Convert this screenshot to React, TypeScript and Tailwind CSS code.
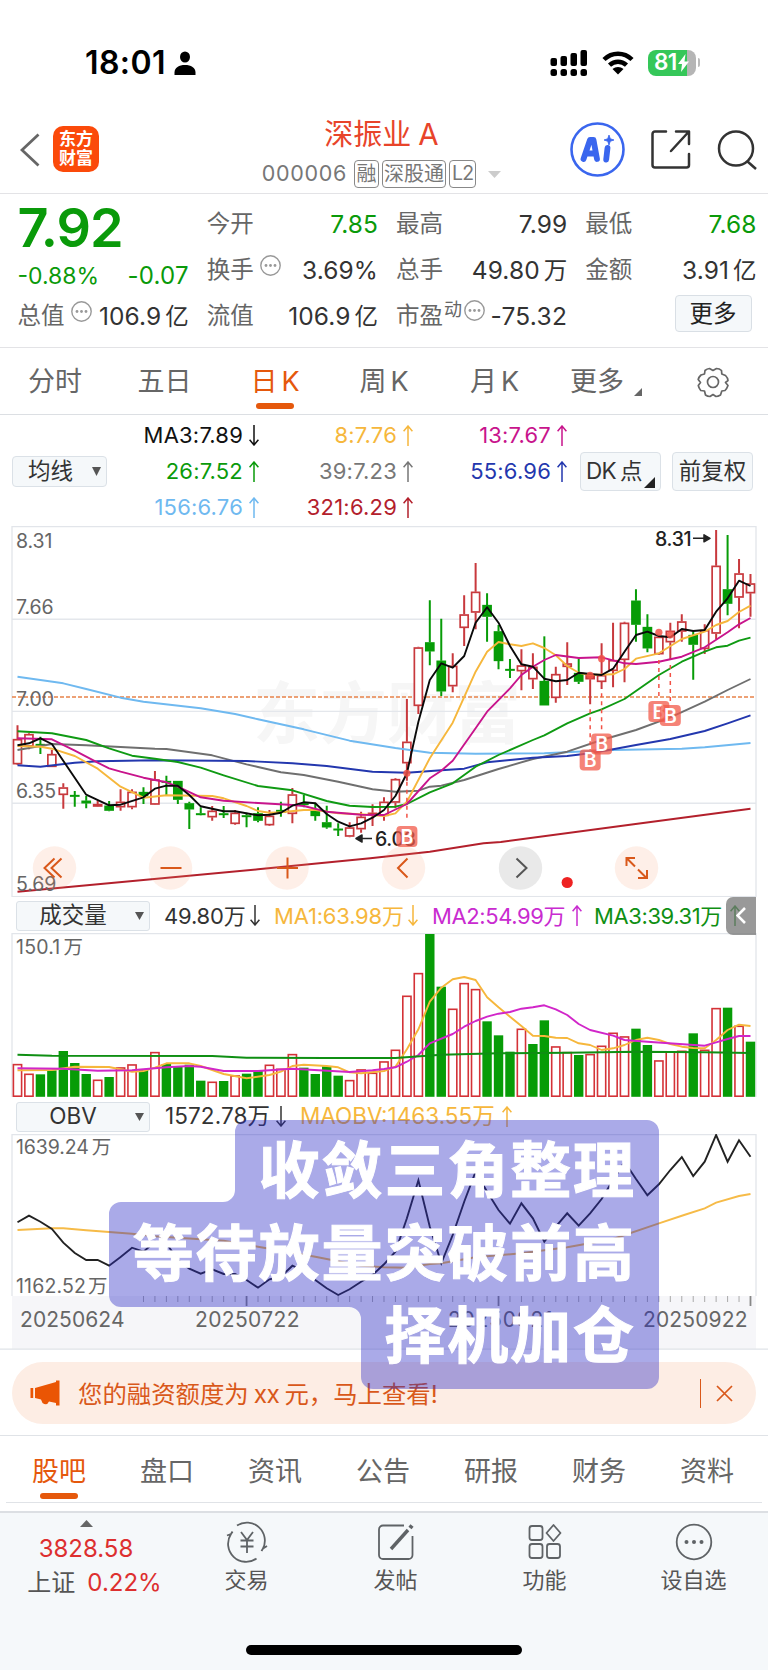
import type { ReactNode } from "react";

type Pt = [number, number];
type Candle = [string, number, number, number, number];

const cx = (i: number) => 17.5 + 11.453 * i;
const toPath = (pts: Pt[], top: number) =>
  pts.map(([i, y], k) => `${k ? "L" : "M"}${cx(i).toFixed(1)} ${(top + y / 3).toFixed(1)}`).join("");

/* index order; [colour, high, body top, body bottom, low] in thirds of a pixel */
const candles: Candle[] = [
  ["r", 616, 657, 733, 735], ["r", 640, 642, 680, 688], ["g", 650, 672, 676, 702], ["r", 690, 702, 741, 741],
  ["r", 790, 802, 825, 866], ["g", 813, 825, 829, 860], ["g", 828, 842, 850, 865], ["s", 842, 852, 860, 861],
  ["g", 843, 857, 872, 874], ["r", 808, 845, 862, 872], ["r", 808, 815, 862, 868], ["g", 802, 816, 828, 852],
  ["r", 753, 778, 854, 855], ["g", 767, 783, 787, 825], ["g", 783, 783, 839, 852], ["g", 845, 850, 868, 927],
  ["g", 862, 880, 884, 886], ["r", 858, 872, 892, 902], ["g", 858, 880, 884, 894], ["r", 870, 878, 912, 914],
  ["g", 878, 886, 890, 922], ["g", 862, 880, 902, 907], ["r", 870, 887, 916, 918], ["g", 845, 870, 878, 890],
  ["r", 804, 823, 882, 910], ["g", 825, 850, 854, 862], ["g", 848, 872, 888, 902], ["g", 857, 907, 922, 926],
  ["g", 910, 926, 930, 948], ["r", 907, 922, 950, 952], ["r", 875, 890, 928, 938], ["r", 853, 878, 884, 918],
  ["r", 832, 845, 888, 902], ["r", 775, 777, 848, 865], ["r", 537, 665, 730, 782], ["r", 380, 382, 558, 582],
  ["g", 241, 367, 394, 436], ["g", 296, 422, 514, 528], ["r", 400, 437, 499, 517], ["r", 226, 283, 324, 378],
  ["r", 129, 215, 278, 328], ["g", 220, 255, 290, 365], ["g", 315, 334, 423, 448], ["g", 417, 447, 451, 474],
  ["r", 388, 436, 454, 511], ["r", 400, 440, 478, 507], ["g", 349, 483, 556, 556], ["r", 440, 462, 534, 548],
  ["r", 367, 430, 441, 495], ["g", 416, 459, 485, 492], ["s", 458, 465, 478, 553], ["r", 370, 465, 486, 507],
  ["r", 308, 420, 453, 502], ["r", 305, 308, 420, 487], ["g", 208, 242, 314, 365], ["g", 283, 321, 385, 397],
  ["r", 345, 350, 403, 405], ["r", 308, 332, 367, 420], ["r", 283, 304, 335, 365], ["g", 335, 345, 374, 479],
  ["r", 313, 330, 387, 402], ["r", 30, 137, 341, 357], ["g", 45, 208, 251, 286], ["r", 117, 160, 233, 325],
  ["r", 162, 190, 220, 290],
];

const ma: { color: string; pts: Pt[] }[] = [
  { color: "#b3202c", pts: [[0, 1115], [21, 1048], [30.8, 1015], [36, 995], [40.7, 970], [42.2, 966], [53.8, 913], [64, 866]] },
  { color: "#6fb9f0", pts: [[0, 470], [4, 490], [6, 507], [9, 533], [11, 545], [16, 565], [19, 582], [21, 598], [25, 628], [29, 662], [33, 684], [36, 698], [40, 701], [46, 700], [52, 690], [58, 686], [60, 682], [64, 669]] },
  { color: "#6f6f6f", pts: [[0, 690], [2, 678], [3, 672], [6, 676], [12, 686], [13, 687], [17, 706], [20, 733], [21, 741], [23, 757], [25, 765], [28, 785], [31, 808], [33, 815], [35, 812], [36, 800], [37, 797], [39, 780], [42, 747], [45, 717], [48, 695], [51, 660], [54, 630], [57, 592], [60, 545], [62, 510], [64, 477]] },
  { color: "#2337ae", pts: [[0, 736], [2, 740], [5, 728], [7, 724], [12, 721], [20, 723], [24, 730], [27, 738], [31, 755], [34, 758], [37, 751], [39, 746], [41, 727], [43, 720], [45, 713], [48, 708], [50, 700], [52, 688], [54, 675], [57, 657], [60, 633], [62, 610], [64, 586]] },
  { color: "#0f9a13", pts: [[0, 634], [3, 640], [6, 660], [8, 685], [10, 707], [12, 716], [14, 726], [16, 743], [18, 766], [21, 798], [24, 811], [27, 843], [29, 857], [31, 861], [33, 860], [34, 852], [36, 817], [38, 790], [40, 740], [42, 705], [45, 660], [46, 646], [48, 610], [50, 580], [51, 568], [53, 537], [56, 465], [58, 425], [60, 395], [61, 382], [62, 377], [63, 362], [64, 353]] },
  { color: "#f6b73c", pts: [[0, 678], [2, 680], [3, 686], [5, 708], [7, 746], [9, 800], [11, 833], [13, 826], [17, 828], [18, 835], [20, 858], [21, 873], [22, 878], [23, 877], [25, 870], [26, 870], [28, 880], [30, 883], [32, 888], [33, 880], [34, 845], [36, 715], [38, 608], [40, 455], [41, 395], [42, 366], [43, 373], [44, 378], [45, 370], [46, 384], [47, 406], [48, 438], [49, 458], [50, 465], [52, 463], [53, 447], [54, 416], [56, 400], [58, 357], [60, 335], [61, 315], [62, 303], [63, 276], [64, 257]] },
  { color: "#c8148c", pts: [[0, 655], [3, 658], [5, 692], [7, 728], [8, 745], [9, 755], [11, 773], [13, 787], [14, 800], [16, 832], [18, 842], [21, 849], [24, 855], [25, 858], [27, 875], [30, 884], [32, 885], [34, 852], [36, 775], [37, 752], [38, 722], [40, 625], [41, 575], [43, 505], [44, 465], [45, 440], [46, 420], [47, 405], [49, 414], [51, 412], [53, 430], [54, 432], [56, 425], [58, 410], [60, 382], [62, 337], [63, 313], [64, 294]] },
  { color: "#0a0a0a", pts: [[0, 676], [1, 670], [2, 655], [3, 672], [6, 824], [8, 856], [9, 854], [11, 832], [12, 806], [13, 797], [14, 797], [15, 825], [16, 859], [18, 874], [19, 874], [21, 886], [22, 884], [23, 878], [24, 857], [25, 847], [26, 850], [27, 882], [28, 905], [29, 919], [30, 910], [31, 893], [32, 870], [33, 828], [34, 760], [35, 605], [36, 480], [37, 430], [38, 443], [39, 408], [40, 308], [41, 262], [42, 308], [43, 378], [44, 433], [45, 440], [46, 476], [47, 484], [48, 480], [49, 458], [50, 462], [51, 465], [52, 446], [53, 395], [54, 345], [55, 335], [56, 348], [57, 352], [58, 327], [59, 333], [60, 330], [61, 275], [62, 235], [63, 182], [64, 198]] },
];

const volumes = "r523 r552 g553 g541 g483 g519 g552 r570 g561 r533 r524 g540 r487 g522 g528 g524 g572 r576 g573 r557 g551 g540 r525 r537 r493 g533 g552 g529 g557 r571 r539 r549 r515 r480 r318 r250 g132 g290 r357 r280 r298 g394 g436 g485 r417 g462 g391 r470 r487 g495 r493 r468 r429 r440 g416 g465 r512 r485 r483 g430 r480 r355 g353 r408 g455".split(" ");

const volMa: { color: string; pts: Pt[] }[] = [
  { color: "#f6b73c", pts: [[0, 541], [3, 540], [5, 530], [8, 531], [10, 545], [11, 543], [12, 533], [13, 520], [15, 520], [16, 528], [18, 552], [20, 565], [22, 555], [23, 545], [24, 528], [25, 524], [27, 528], [28, 532], [29, 547], [30, 550], [32, 543], [33, 530], [34, 478], [35, 418], [36, 335], [37, 293], [38, 268], [39, 261], [40, 270], [41, 322], [42, 352], [43, 380], [44, 408], [45, 437], [46, 438], [47, 443], [48, 444], [49, 460], [50, 465], [51, 480], [52, 475], [53, 465], [54, 450], [55, 443], [56, 450], [57, 462], [58, 470], [59, 474], [60, 475], [61, 450], [62, 420], [63, 404], [64, 408]] },
  { color: "#d126c9", pts: [[0, 535], [4, 536], [7, 542], [10, 541], [13, 532], [15, 528], [16, 530], [18, 543], [21, 543], [24, 536], [29, 546], [31, 541], [32, 537], [33, 532], [34, 515], [35, 495], [36, 460], [38, 432], [39, 410], [40, 393], [41, 380], [42, 371], [43, 366], [44, 356], [45, 352], [46, 346], [47, 358], [48, 375], [49, 402], [50, 420], [52, 437], [53, 450], [55, 455], [60, 467], [61, 457], [62, 447], [63, 438], [64, 438]] },
  { color: "#0f8f13", pts: [[0, 494], [3, 497], [17, 498], [20, 503], [27, 504], [33, 504], [37, 494], [42, 490], [48, 488], [54, 485], [60, 487], [64, 489]] },
];

const obv: Pt[] = [382, 362, 380, 402, 443, 474, 495, 495, 512, 486, 458, 470, 440, 445, 495, 521, 536, 523, 537, 537, 555, 578, 553, 545, 512, 528, 555, 580, 600, 583, 560, 540, 508, 470, 370, 256, 395, 505, 420, 320, 230, 290, 345, 386, 325, 370, 440, 395, 355, 392, 355, 312, 255, 200, 252, 301, 268, 225, 186, 243, 200, 120, 200, 136, 185].map((y, i) => [i, y]);
const obvMa: Pt[] = [[0, 405], [3, 400], [4, 400], [6, 406], [10, 416], [12, 424], [18, 437], [21, 455], [26, 485], [30, 512], [32, 517], [34, 518], [36, 507], [37, 505], [40, 487], [44, 475], [48, 457], [52, 432], [56, 385], [58.2, 360], [60, 340], [61, 323], [63, 303], [64, 297]];

const Arrow = ({ down }: { down?: boolean }) => (
  <svg className={down ? "h-[21px] w-[10px] shrink-0 rotate-180" : "h-[21px] w-[10px] shrink-0"} viewBox="0 0 10 21" fill="none" stroke="currentColor" strokeWidth="1.5">
    <path d="M5 21V1M0.6 6.2L5 1l4.4 5.2" />
  </svg>
);

const Info = () => (
  <svg className="h-[21px] w-[21px] shrink-0" viewBox="0 0 21 21">
    <circle cx="10.5" cy="10.5" r="9.7" fill="none" stroke="#999" strokeWidth="1.4" />
    <circle cx="6" cy="10.5" r="1.4" fill="#999" />
    <circle cx="10.5" cy="10.5" r="1.4" fill="#999" />
    <circle cx="15" cy="10.5" r="1.4" fill="#999" />
  </svg>
);

const Row = ({ label, extra, children, green }: { label: string; extra?: ReactNode; children?: ReactNode; green?: boolean }) => (
  <div className="flex h-[46px] items-center">
    <span className="text-[23.5px] text-[#666]">{label}</span>
    {extra}
    <span className={green ? "ml-auto text-[24.5px] tracking-[0.1px] text-[#0a9a0a]" : "ml-auto text-[24.5px] tracking-[0.1px] text-[#333]"}>{children}</span>
  </div>
);

const Han = ({ children }: { children: string }) => <span className="ml-[4px] tracking-normal text-[23.5px]">{children}</span>;

const Ma = ({ color, text, down }: { color: string; text: string; down?: boolean }) => (
  <div className={`flex h-[36px] items-center justify-end gap-[6px] ${color}`}>
    <span className="text-[22px] tracking-[0.2px]">{text}</span>
    <Arrow down={down} />
  </div>
);

const Select = ({ children }: { children: string }) => (
  <div className="flex h-[30px] w-[134px] shrink-0 items-center rounded-[3px] border border-[#dbe1e7] bg-[#f5f8fa] text-[22.5px] text-[#333]">
    <span className="ml-auto w-[80px] text-center">{children}</span>
    <svg className="mr-[5px] ml-[22px] h-[8px] w-[9px]" viewBox="0 0 9 8"><path d="M0 0h9L4.500 8z" fill="#555" /></svg>
  </div>
);

const Badge = ({ x, y }: { x: number; y: number }) => (
  <g>
    <rect x={x - 10.5} y={y - 10.5} width="21" height="21" rx="4" fill="#f25a4a" fillOpacity="0.75" />
    <text x={x} y={y + 7} fontSize="19.500" fontWeight="600" fill="#fff" textAnchor="middle">B</text>
  </g>
);

const signals = [
  { i: 34, dot: 760, from: 785, to: 905, y: 836.5 },
  { i: 50, dot: 466, from: 568, to: 690, y: 760 },
  { i: 51, dot: 416, from: 520, to: 640, y: 744 },
  { i: 56, dot: 337, from: 420, to: 530, y: 711.5 },
  { i: 57, dot: 344, from: 435, to: 550, y: 715.5 },
];

const PriceChart = () => (
  <svg className="block h-[371px] w-[768px] font-['Inter','Noto_Sans_CJK_SC',sans-serif]" viewBox="0 526 768 371">
    <text x="387" y="738" fontSize="67" fontWeight="700" fill="#f6f6f6" textAnchor="middle">东方财富</text>
    <g stroke="#e4e7ec" strokeWidth="1.4">
      <path d="M12 619.2H756M12 711.4H756M12 803.2H756" />
    </g>
    <rect x="12" y="526.600" width="744" height="370" fill="none" stroke="#e2e5ea" strokeWidth="1.300" />
    <path d="M12 697H756" stroke="#e8824a" strokeWidth="1.700" strokeDasharray="4 2" />
    {candles.map(([k, h, t, b, l], i) => {
      const c = k === "g" ? "#079c07" : "#c8393d";
      const x = cx(i);
      const y = (v: number) => 520 + v / 3;
      return (
        <g key={i} stroke={c} strokeWidth="2">
          <path d={`M${x} ${y(h)}V${y(t)}M${x} ${y(b)}V${y(l)}`} />
          <rect x={x - 4} y={y(t) + 0.7} width="8" height={Math.max((b - t) / 3 - 1.4, 0.3)} fill={k === "r" ? "#fff" : c} strokeWidth="1.700" />
        </g>
      );
    })}
    {ma.map((m) => <path key={m.color} d={toPath(m.pts, 520)} fill="none" stroke={m.color} strokeWidth="1.900" strokeLinejoin="round" />)}
    <g fontSize="19.500" fill="#666" letterSpacing="-0.100">
      <text x="16" y="547.800">8.31</text>
      <text x="16" y="613.700">7.66</text>
      <text x="16" y="705.700">7.00</text>
      <text x="16" y="798">6.35</text>
      <text x="16" y="890.500">5.69</text>
    </g>
    <g fontSize="19.500" fill="#222" letterSpacing="-0.300" fontWeight="450">
      <text x="655" y="545.500">8.31</text>
      <text x="375" y="846">6.03</text>
    </g>
    <g stroke="#222" strokeWidth="1.500" fill="#222">
      <path d="M693 538.300H706M704 534.800L710 538.300L704 541.800z" strokeLinejoin="round" />
      <path d="M372 838.500H360M362 835L356 838.500L362 842z" strokeLinejoin="round" />
    </g>
    {signals.map((s) => (
      <g key={s.i}>
        <circle cx={cx(s.i)} cy={520 + s.dot / 3} r="3.600" fill="#f25246" fillOpacity="0.85" />
        <path d={`M${cx(s.i)} ${520 + s.from / 3}V${520 + s.to / 3}`} stroke="#f25246" strokeWidth="1.500" strokeDasharray="4 4" />
        <Badge x={cx(s.i)} y={s.y} />
      </g>
    ))}
    <g fill="#fb9263" fillOpacity="0.15">
      {[54.5, 170.5, 287, 403.5, 636.5].map((x) => <circle key={x} cx={x} cy="868" r="21.700" />)}
    </g>
    <circle cx="520.500" cy="868" r="21.700" fill="#777" fillOpacity="0.16" />
    <g fill="none" stroke="#d9581a" strokeWidth="2">
      <path d="M54.500 858.500L44.500 868L54.500 877.500M61.500 858.500L51.500 868L61.500 877.500" />
      <path d="M160.500 868H181.500M277 868H298M287.500 857.500V878.500" />
      <path d="M407.500 858.500L398 868L407.500 877.500" />
      <path d="M635 858H626.500V866M627 858.500L635 866.500M638 878H647V870M646 877.500L638 869.500" />
    </g>
    <path d="M516.500 858.500L526.500 868L516.500 877.500" fill="none" stroke="#555" strokeWidth="2" />
    <circle cx="567.200" cy="882.500" r="5.600" fill="#ee2222" />
  </svg>
);

const VolumeChart = () => (
  <svg className="block h-[165px] w-[768px] font-['Inter','Noto_Sans_CJK_SC',sans-serif]" viewBox="0 933 768 165">
    <path d="M12 1097V933.700H756V1097" fill="none" stroke="#e2e5ea" strokeWidth="1.300" />
    {volumes.map((v, i) => {
      const y = 890 + Number(v.slice(1)) / 3;
      return v[0] === "g" ? (
        <rect key={i} x={cx(i) - 4.7} y={y} width="9.400" height={1096.8 - y} fill="#079c07" />
      ) : (
        <rect key={i} x={cx(i) - 4.1} y={y + 0.3} width="8.200" height={1095.9 - y} fill="#fff" stroke="#d43237" strokeWidth="1.600" />
      );
    })}
    {volMa.map((m) => <path key={m.color} d={toPath(m.pts, 890)} fill="none" stroke={m.color} strokeWidth="1.900" strokeLinejoin="round" />)}
    <text x="16" y="953.500" fontSize="19.500" fill="#666" letterSpacing="0.200">150.1<tspan dx="3">万</tspan></text>
  </svg>
);

const dates: [number, string][] = [[20, "20250624"], [195, "20250722"], [448, "20250821"], [643, "20250922"]];

const ObvChart = () => (
  <svg className="block h-[216px] w-[768px] font-['Inter','Noto_Sans_CJK_SC',sans-serif]" viewBox="0 1134 768 216">
    <rect x="12" y="1296" width="744" height="53" fill="#f6f6f9" />
    <path d="M12 1296V1134.500H756V1296" fill="none" stroke="#e2e5ea" strokeWidth="1.300" />
    <path d={toPath(obvMa, 1095)} fill="none" stroke="#f6bb48" strokeWidth="1.900" />
    <path d={toPath(obv, 1095)} fill="none" stroke="#222" strokeWidth="1.900" />
    {Array.from({ length: 54 }, (_, k) => k + 11).map((i) => {
      const major = i === 20 || i === 42 || i === 64;
      return <path key={i} d={`M${cx(i)} 1296V${major ? 1306 : 1302}`} stroke={major ? "#888" : "#aaa"} strokeWidth={major ? 1.8 : 1} />;
    })}
    <g fontSize="19.500" fill="#666">
      <text x="16" y="1153.500" letterSpacing="-0.100">1639.24<tspan dx="3">万</tspan></text>
      <text x="16" y="1293" letterSpacing="0.150">1162.52<tspan dx="2">万</tspan></text>
    </g>
    <g fontSize="21" fill="#666">
      {dates.map(([x, d]) => <text key={d} x={x} y="1326.700" textLength={104.5} lengthAdjust="spacing">{d}</text>)}
    </g>
    <path d="M0 1349.200H768" stroke="#dfe3e8" strokeWidth="1.300" />
  </svg>
);

const periods: { text: string; latin?: string; width: string; active?: boolean }[] = [
  { text: "分时", width: "w-[110px]" },
  { text: "五日", width: "w-[109px]" },
  { text: "日", latin: "K", width: "w-[112px]", active: true },
  { text: "周", latin: "K", width: "w-[106px]" },
  { text: "月", latin: "K", width: "w-[115px]" },
];
const sections = ["股吧", "盘口", "资讯", "公告", "研报", "财务", "资料"];

const BottomItem = ({ label, children }: { label: string; children: ReactNode }) => (
  <div className="flex w-[149px] flex-col items-center pt-[8px]">
    <svg className="h-[42px] w-[44px]" viewBox="0 0 44 42" fill="none" stroke="#5f6366" strokeWidth="1.800">{children}</svg>
    <span className="mt-[6px] text-[22px] text-[#555]">{label}</span>
  </div>
);

export default function App() {
  return (
    <div className="relative h-[1670px] w-[768px] overflow-hidden bg-white font-['Inter','Noto_Sans_CJK_SC',sans-serif] leading-none font-[390] text-[#333] whitespace-nowrap">
      {/* status bar */}
      <div className="flex h-[104px] items-center pt-[21px]">
        <span className="ml-[85px] w-[81px] text-[32px] font-semibold tracking-[0.4px] text-black">18:01</span>
        <svg className="ml-[8px] h-[24px] w-[22px]" viewBox="0 0 22 24"><ellipse cx="11" cy="6" rx="5" ry="5.600" /><path d="M0.500 24v-2.500C.5 16.500 5 14 11 14s10.500 2.500 10.500 7.500V24z" /></svg>
        <svg className="ml-[354px] h-[26px] w-[38px]" viewBox="0 0 38 26">
          <rect x="0.500" y="8" width="6.500" height="8" rx="2" /><rect x="10.500" y="6" width="6.500" height="10" rx="2" /><rect x="20.500" y="3" width="6.500" height="13" rx="2" /><rect x="30.500" y="0" width="6.500" height="16" rx="2" />
          <rect x="0.500" y="19" width="6.500" height="7" rx="2.500" /><rect x="10.500" y="19" width="6.500" height="7" rx="2.500" /><rect x="20.500" y="19" width="6.500" height="7" rx="2.500" /><rect x="30.500" y="19" width="6.500" height="7" rx="2.500" />
        </svg>
        <svg className="ml-[13px] h-[24px] w-[34px]" viewBox="0 0 34 24">
          <path d="M3 8.500C11 0.800 23 0.800 31 8.500M8.500 14.200C13.500 9.600 20.500 9.600 25.500 14.200" fill="none" stroke="#000" strokeWidth="4.500" />
          <path d="M17 23.500L11.500 18C14.500 15.300 19.500 15.300 22.500 18z" />
        </svg>
        <div className="ml-[13px] flex h-[26px] w-[48px] items-center rounded-[8px] bg-linear-to-r from-[#35c759] from-82% to-[#b5b5b5] to-82% pl-[6px] text-[22.5px] font-semibold tracking-[-0.6px] text-white">
          81
          <svg className="ml-[1px] h-[18px] w-[11px]" viewBox="0 0 11 18"><path d="M7.500 0L0 10h4L3 18l8-10.500H6.500z" fill="#fff" /></svg>
        </div>
        <div className="ml-[2px] h-[9px] w-[2px] rounded-r-full bg-[#bbb]" />
      </div>

      {/* title bar */}
      <div className="flex h-[90px] items-start border-b border-[#e3e3e6]">
        <div className="flex w-[235px] items-center pt-[22px] pl-[20px]">
          <svg className="mt-[2px] h-[34px] w-[20px]" viewBox="0 0 20 34" fill="none" stroke="#666" strokeWidth="2.800"><path d="M18.500 1.500L2 17L18.500 32.500" /></svg>
          <div className="ml-[13px] flex h-[46px] w-[46px] flex-col items-center justify-center gap-[2px] rounded-[10px] bg-[#fb4a0a] text-[17px] font-bold text-white">
            <span>东方</span>
            <span>财富</span>
          </div>
        </div>
        <div className="flex w-[293px] flex-col items-center">
          <div className="mt-[16px] flex h-[29px] text-[29px] text-[#e8442a]">深振业<span className="ml-[7px] text-[29.5px]">A</span></div>
          <div className="mt-[11px] flex items-center text-[#777]">
            <span className="text-[21.5px] tracking-[0.7px]">000006</span>
            <span className="ml-[7px] flex h-[28px] items-center rounded-[4px] border-[1.5px] border-[#888] px-[1.5px] text-[20px]">融</span>
            <span className="ml-[3px] flex h-[28px] items-center rounded-[4px] border-[1.5px] border-[#888] px-[1px] text-[20px]">深股通</span>
            <span className="ml-[3px] flex h-[28px] items-center rounded-[4px] border-[1.5px] border-[#888] px-[2px] text-[19.5px] tracking-[-0.8px]">L2</span>
            <svg className="ml-[12px] h-[7px] w-[13px]" viewBox="0 0 13 7"><path d="M0 0h13L6.500 7z" fill="#ccc" /></svg>
          </div>
        </div>
        <div className="flex items-center pt-[18px] pl-[42px]">
          <svg className="h-[55px] w-[55px]" viewBox="0 0 55 55">
            <circle cx="27.500" cy="27.500" r="26" fill="none" stroke="#3a66ee" strokeWidth="2.600" />
            <g fill="none" stroke="#3a66ee" strokeWidth="5.800" strokeLinecap="round" strokeLinejoin="round">
              <path d="M13.500 37L20 18H23.500L27 37M17 31.500H25.500" />
              <path d="M37.500 26L36.200 37.500" />
            </g>
            <path d="M39 13l1.300 3.700L44 18l-3.700 1.300L39 23l-1.300-3.700L34 18l3.700-1.300z" fill="#3a66ee" stroke="#3a66ee" strokeWidth="0.800" />
          </svg>
          <svg className="ml-[26px] h-[39px] w-[40px]" viewBox="0 0 40 39" fill="none" stroke="#333" strokeWidth="2.500" strokeLinecap="round" strokeLinejoin="round">
            <path d="M15 1.500H4A2.500 2.500 0 0 0 1.500 4V35A2.500 2.500 0 0 0 4 37.500H35.500A2.500 2.500 0 0 0 38 35V24M25 1.500H38V14M37 2.500L20 21" />
          </svg>
          <svg className="ml-[26px] h-[40px] w-[41px]" viewBox="0 0 41 40" fill="none" stroke="#333" strokeWidth="2.500"><circle cx="19" cy="18.500" r="17" /><path d="M30.500 31.500L39 39" /></svg>
        </div>
      </div>

      {/* quote */}
      <div className="grid h-[154px] grid-cols-4 gap-x-[18px] border-b border-[#e3e3e6] pt-[7px] pr-[11.5px] pl-[17.5px]">
        <div className="flex flex-col">
          <div className="h-[53px] text-[54px] font-semibold tracking-[-1px] text-[#0a9a0a]">7.92</div>
          <div className="mt-[10px] flex h-[24px] items-center justify-between text-[#0a9a0a]"><span className="text-[23px]">-0.88%</span><span className="text-[24px] tracking-[0.2px]">-0.07</span></div>
          <div className="mt-[5px] flex h-[46px] items-center">
            <span className="text-[23.5px] text-[#666]">总值</span>
            <span className="mt-[-10px] ml-[6px] flex"><Info /></span>
            <span className="ml-auto text-[24.5px] tracking-[0.1px]">106.9<Han>亿</Han></span>
          </div>
        </div>
        <div>
          <Row label="今开" green>7.85</Row>
          <Row label="换手" extra={<span className="mt-[-10px] ml-[6px] flex"><Info /></span>}>3.69%</Row>
          <Row label="流值">106.9<Han>亿</Han></Row>
        </div>
        <div>
          <Row label="最高">7.99</Row>
          <Row label="总手">49.80<Han>万</Han></Row>
          <Row label="市盈" extra={<span className="mt-[-12px] ml-[1px] flex items-center gap-[2px] text-[18px] text-[#666]">动<Info /></span>}><span className="tracking-[0.3px]">-75.32</span></Row>
        </div>
        <div>
          <Row label="最低" green>7.68</Row>
          <Row label="金额">3.91<Han>亿</Han></Row>
          <div className="mt-[2px] mr-[5px] ml-auto flex h-[37px] w-[77px] items-center justify-center rounded-[4px] border border-[#d9dfe5] bg-[#f5f8fa] text-[23.5px] text-[#222]">更多</div>
        </div>
      </div>

      {/* period tabs */}
      <div className="flex h-[67px] items-center border-b-[1.5px] border-[#dcdfe3] pt-px text-[27px] text-[#666]">
        {periods.map((p) => (
          <div key={p.text} className={`relative flex h-full items-center justify-center gap-[4px] ${p.width} ${p.active ? "text-[#e5580c]" : ""}`}>
            <span>{p.text}</span>
            {p.latin && <span>{p.latin}</span>}
            {p.active && <span className="absolute bottom-[5px] h-[6px] w-[38px] rounded-full bg-[#e5580c]" />}
          </div>
        ))}
        <span className="ml-[18px]">更多</span>
        <svg className="mt-[20px] ml-[10px] h-[8px] w-[8px]" viewBox="0 0 8 8"><path d="M8 0V8H0z" fill="#666" /></svg>
        <svg className="ml-[55px] h-[32px] w-[32px]" viewBox="0 0 32 32" fill="none" stroke="#666" strokeWidth="1.700" strokeLinejoin="round">
          <circle cx="16" cy="16" r="5.500" />
          <path d="M12.500 2.500L16 4.500L19.500 2.500Q22.500 2.500 24.500 4.500L24.800 8L28.500 9.500Q31 12 31 14.500L28.500 16.500L31 19.500Q30 22.500 28 24.500L24.800 25L23.500 29Q21 30.500 19 30.500L16 28.500L13 30.500Q10.500 30.500 8.500 29L7.500 25L3.800 24.500Q1.800 22 1.300 19.500L3.500 16.500L1.200 13.500Q1.800 11 4 9L7.500 8L8 4.500Q10 2.800 12.500 2.500Z" />
        </svg>
      </div>

      {/* moving averages */}
      <div className="flex h-[111px]">
        <div className="mt-[41px] ml-[12px] flex h-[31px] w-[95px] items-center rounded-[4px] border border-[#dbe1e7] bg-[#f5f8fa] pl-[15px] text-[22.5px]">
          均线<svg className="ml-[19px] h-[9px] w-[9px]" viewBox="0 0 9 9"><path d="M0 0h9L4.500 9z" fill="#555" /></svg>
        </div>
        <div className="mt-[2px] grid w-[461px] grid-cols-[152px_154px_154px] content-start">
          <Ma color="text-[#111]" text="MA3:7.89" down />
          <Ma color="text-[#f6b73c]" text="8:7.76" />
          <Ma color="text-[#c8148c]" text="13:7.67" />
          <Ma color="text-[#0a9a0a]" text="26:7.52" />
          <Ma color="text-[#777]" text="39:7.23" />
          <Ma color="text-[#2337ae]" text="55:6.96" />
          <Ma color="text-[#6fb9f0]" text="156:6.76" />
          <Ma color="text-[#b3202c]" text="321:6.29" />
        </div>
        <div className="mt-[37px] ml-[12px] flex h-[39px] w-[81px] items-center rounded-[4px] border border-[#dbe1e7] bg-[#f5f8fa] pl-[5px] text-[22.5px]">
          <span className="tracking-[-0.7px]">DK</span><span className="ml-[4px]">点</span>
          <svg className="mt-[21px] ml-[2px] h-[11px] w-[11px] shrink-0" viewBox="0 0 11 11"><path d="M11 0V11H0z" fill="#222" /></svg>
        </div>
        <div className="mt-[37px] ml-[11px] flex h-[39px] w-[81px] items-center justify-center rounded-[4px] border border-[#dbe1e7] bg-[#f5f8fa] text-[22.5px]">前复权</div>
      </div>

      <PriceChart />

      <div className="flex h-[36px] items-center pt-px pl-[16px] text-[22px]">
        <Select>成交量</Select>
        <div className="ml-[14px] flex w-[110px] items-center justify-between pr-[14px]"><span className="tracking-[-0.2px]">49.80万</span><Arrow down /></div>
        <div className="flex w-[158px] items-center justify-between pr-[14px] text-[#f6b73c]"><span className="tracking-[-0.2px]">MA1:63.98万</span><Arrow down /></div>
        <div className="flex w-[162px] items-center justify-between pr-[12px] text-[#c92bd0]"><span className="tracking-[-0.4px]">MA2:54.99万</span><Arrow /></div>
        <div className="flex w-[146px] items-center justify-between text-[#0f8f13]"><span className="tracking-[-0.4px]">MA3:39.31万</span><Arrow /></div>
        <div className="relative ml-[-14px] flex h-[38px] w-[30px] items-center justify-center rounded-l-[7px] bg-[#777]/75">
          <svg className="h-[17px] w-[10px]" viewBox="0 0 10 17" fill="none" stroke="#fff" strokeWidth="2.600"><path d="M9 1L1.500 8.500L9 16" /></svg>
        </div>
      </div>

      <VolumeChart />

      <div className="flex h-[36px] items-center pt-px pl-[16px] text-[22px]">
        <Select>OBV</Select>
        <div className="ml-[15px] flex w-[135px] items-center justify-between pr-[14px]"><span className="text-[22.5px] tracking-[0.1px]">1572.78万</span><Arrow down /></div>
        <div className="flex w-[212px] items-center justify-between text-[#f6b73c]"><span className="text-[22.5px]">MAOBV:1463.55万</span><Arrow /></div>
      </div>

      <ObvChart />

      {/* notice */}
      <div className="mx-[12px] mt-[12px] flex h-[62px] items-center rounded-full bg-[#fdede4] text-[24.400px] text-[#d9581a]">
        <svg className="ml-[18px] h-[26px] w-[30px]" viewBox="0 0 30 26" fill="#ea5504"><path d="M0.500 8h2.700v10H.5zM5 8L26 2V0.500h3.500V25.500H26V23L19 21.500Q17 26 12.500 23L11 19.500L5 18z" /></svg>
        <span className="mt-[2px] ml-[18px]">您的融资额度为</span>
        <span className="mx-[5px] mt-[2px] tracking-[-0.500px]">xx</span>
        <span className="mt-[2px]">元，马上查看!</span>
        <span className="ml-auto h-[29px] w-[1.5px] bg-[#d9581a]" />
        <svg className="mr-[23px] ml-[15px] h-[17px] w-[17px]" viewBox="0 0 17 17" stroke="#d9581a" strokeWidth="1.700"><path d="M1 1L16 16M16 1L1 16" /></svg>
      </div>

      {/* section tabs */}
      <div className="mt-[11px] flex h-[67px] border-t border-[#e0e3e7] px-[5px]">
        {sections.map((s, i) => (
          <div key={s} className={i === 0 ? "relative flex w-[108px] justify-center pt-[22px] text-[27px] text-[#e5580c]" : "flex w-[108px] justify-center pt-[22px] text-[27px] text-[#666]"}>
            {s}
            {i === 0 && <span className="absolute bottom-[3px] h-[6px] w-[38px] rounded-full bg-[#e5580c]" />}
          </div>
        ))}
      </div>
      <div className="mx-[6px] h-[9px] border-t border-[#e0e3e7]" />

      {/* bottom bar */}
      <div className="h-[160px] border-t-2 border-[#dcdfe3] bg-[#f5f8fa]">
        <div className="flex h-[86px]">
          <div className="flex w-[172px] flex-col items-center pt-[7px]">
            <svg className="h-[7px] w-[13px]" viewBox="0 0 13 7"><path d="M0 7h13L6.500 0z" fill="#666" /></svg>
            <span className="mt-[10px] text-[24px] text-[#dd2f2f]">3828.58</span>
            <div className="mt-[10px] ml-[17px] flex items-center"><span className="text-[24px] text-[#555]">上证</span><span className="ml-[12px] text-[24px] text-[#dd2f2f]">0.22%</span></div>
          </div>
          <BottomItem label="交易">
            <path d="M12 4.500A18 18 0 0 1 38 27.500L42 25M38 27.500L36.500 30M31.500 37.500A18 18 0 0 1 6 13L2 14.500M6 13L7.500 10.500" />
            <path d="M16 11L22 19L28 11M15.500 19.500H28.500M15.500 25.500H28.500M22 19V32" />
          </BottomItem>
          <BottomItem label="发帖">
            <path d="M30 4.500H9A4 4 0 0 0 5 8.500V34A4 4 0 0 0 9 38H34.500A4 4 0 0 0 38.500 34V15" />
            <path d="M17 28L34 9" strokeWidth="3.400" /><path d="M36 7L38 4.500" strokeWidth="4" />
          </BottomItem>
          <BottomItem label="功能">
            <rect x="6.500" y="5" width="13" height="14" rx="2.500" /><rect x="6.500" y="23" width="13" height="14" rx="2.500" /><rect x="24" y="23" width="13" height="14" rx="2.500" />
            <path d="M30.500 4L37.500 12L30.500 20L23.500 12z" strokeLinejoin="round" />
          </BottomItem>
          <BottomItem label="设自选">
            <circle cx="22" cy="21" r="17.300" />
            <g fill="#5f6366" stroke="none"><circle cx="14.500" cy="21" r="2" /><circle cx="22" cy="21" r="2" /><circle cx="29.500" cy="21" r="2" /></g>
          </BottomItem>
        </div>
        <div className="mx-auto mt-[46px] h-[10px] w-[276px] rounded-full bg-black" />
      </div>

      {/* caption over the charts */}
      <div className="absolute top-[1120px] left-[109px] h-[269px] w-[550px]">
        <svg className="absolute inset-0 h-[269px] w-[550px]" viewBox="0 0 550 269">
          <path d="M138 0H538A12 12 0 0 1 550 12V257A12 12 0 0 1 538 269H264A12 12 0 0 1 252 257V199A12 12 0 0 0 240 187H12A12 12 0 0 1 0 175V94A12 12 0 0 1 12 82H114A12 12 0 0 0 126 70V12A12 12 0 0 1 138 0Z" fill="#2a2ac6" fillOpacity="0.4" />
        </svg>
        <div className="relative flex flex-col items-end pt-[10px] pr-[23px] text-[61px] leading-[82.5px] font-bold tracking-[1.9px] text-white [-webkit-text-stroke:1px_white]">
          <span>收敛三角整理</span>
          <span>等待放量突破前高</span>
          <span>择机加仓</span>
        </div>
      </div>
    </div>
  );
}
